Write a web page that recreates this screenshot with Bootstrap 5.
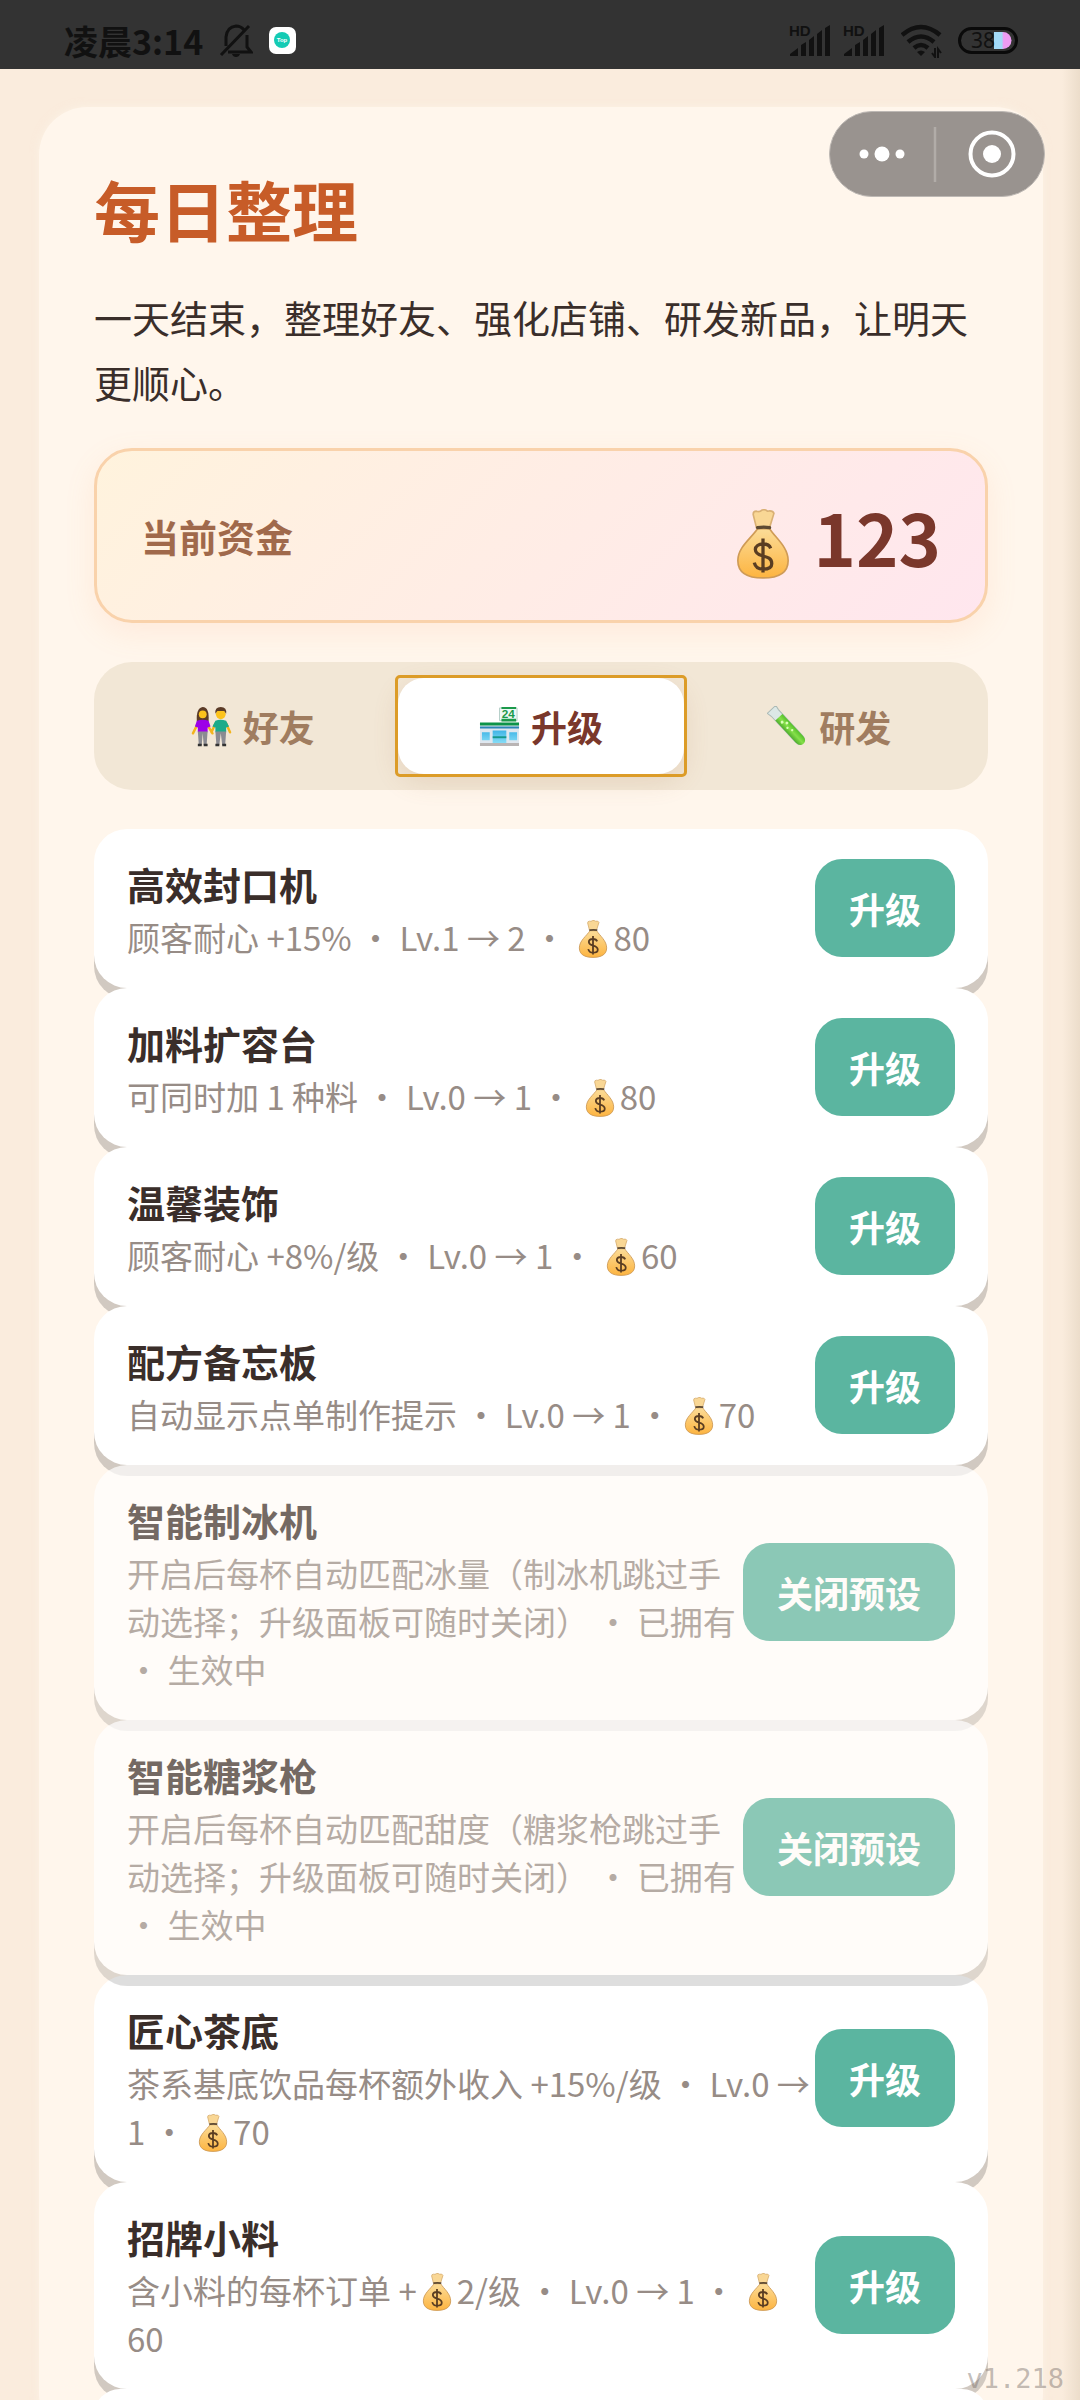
<!DOCTYPE html>
<html lang="zh-CN">
<head>
<meta charset="utf-8">
<meta name="viewport" content="width=device-width, initial-scale=1">
<title>每日整理</title>
<link rel="stylesheet" href="https://cdn.jsdelivr.net/npm/bootstrap@5.3.0/dist/css/bootstrap.min.css">
<style>
  body{font-family:"Noto Sans CJK SC",sans-serif;background:#faecdd;color:#3a2e2a;overflow:hidden}
  .screen{height:100vh;overflow:hidden;position:relative}
  .statusbar{height:69px;background:#333;color:#111;padding:12px 62px 0 64px;line-height:30px;position:relative;z-index:2}
  .clock{font-size:34px;font-weight:700}
  .appmark{width:27px;height:27px}
  .page-wrap{padding:38px 37px 0 39px;background:linear-gradient(90deg,transparent calc(100% - 18px),rgba(150,130,90,.14))}
  .panel{background:#fff6ec;border-radius:48px;padding:66px 55px 0;box-shadow:0 0 8px rgba(255,250,240,.5)}
  .page-title{color:#c75c28;font-size:66px;font-weight:700;line-height:70px;margin-bottom:41px}
  .intro{font-size:38px;line-height:65px;margin-bottom:34px}
  .funds{height:175px;border:3px solid #f9d2ab;border-radius:38px;padding:0 44px;background:linear-gradient(135deg,#fff3dd,#ffe6ee);box-shadow:0 10px 30px rgba(255,160,110,.13)}
  .funds-label{color:#a0694b;font-size:38px;font-weight:700}
  .funds-value{color:#7a372b;font-size:72px;font-weight:700;line-height:80px}
  .tabbar{margin-top:39px;background:#f2e7d6;border-radius:38px;padding:16px;gap:3px}
  .tabbar button{border:0;background:none;padding:0;height:96px;flex:1 1 0;border-radius:2px;font-size:36px;font-weight:600;color:#a07d60}
  .tabbar button > span{height:100%;border-radius:26px;gap:11px}
  .tabbar button.on{color:#7a372b;outline:3px solid #dc9c28}
  .tabbar button.on > span{background:#fff;box-shadow:0 8px 26px rgba(170,110,70,.16)}
  .items{margin-top:39px}
  .upgrade{background:#fff;border-radius:33px;padding:25px 33px 27px;box-shadow:0 11px 0 rgba(0,0,0,.18)}
  .upgrade.owned{opacity:.7}
  .upgrade h2{font-size:38px;line-height:59px;font-weight:700;margin:0;color:#3a2e2a}
  .upgrade p{font-size:33px;line-height:48px;margin:0;color:#978c86}
  .act{border:0;background:#5bb5a0;color:#fff;font-size:36px;font-weight:700;height:98px;padding:0 34px;border-radius:27px;white-space:nowrap}
  .capsule{position:absolute;right:35px;top:111px;width:216px;height:86px;z-index:3}
  .capsule button{position:absolute;top:0;width:50%;height:100%;opacity:0;border:0}
  .version{position:absolute;right:16px;bottom:3px;font:27px/36px "DejaVu Sans Mono",monospace;color:rgba(120,110,105,.45);z-index:3}
  .e-sm{width:38px;height:38px;vertical-align:-7px;margin:0 1px}
  .e-tab{width:41px;height:41px}
  .e-lg{width:70px;height:70px}
</style>
</head>
<body>
<svg width="0" height="0" class="position-absolute" aria-hidden="true">
  <defs>
    <linearGradient id="gold" x1="0" y1="0" x2="0" y2="1"><stop offset="0" stop-color="#fbdc98"/><stop offset="1" stop-color="#fdb440"/></linearGradient>
    <linearGradient id="glass" x1="0" y1="0" x2="0" y2="1"><stop offset="0" stop-color="#3fb4e6"/><stop offset="1" stop-color="#8ce0f8"/></linearGradient>
    <linearGradient id="lime" x1="0" y1="0" x2="1" y2="0"><stop offset="0" stop-color="#4fae2c"/><stop offset=".5" stop-color="#86e04a"/><stop offset="1" stop-color="#55c02a"/></linearGradient>
    <linearGradient id="charge" x1="0" y1="0" x2="1" y2="0"><stop offset=".45" stop-color="#a3daf7"/><stop offset=".55" stop-color="#ee9cf3"/></linearGradient>
    <symbol id="bag" viewBox="0 0 64 64">
      <path d="M26 17 23 5q0-3 3-3 3 1 5-1 3-1 5 1 5-1 6 2l-4 13z" fill="#f9d795" stroke="#d9b074" stroke-width="1.5"/>
      <path d="M27 18C21 27 9 35 9 47c0 11 9 16 23 16s23-5 23-16c0-12-11-20-17-29z" fill="url(#gold)" stroke="#cf9b56" stroke-width="1.5"/>
      <path d="M27 17q6-1 11 0" fill="none" stroke="#5d4a33" stroke-width="3" stroke-linecap="round"/>
      <path d="M39 36c-1-3-4-4-7-4-4 0-7 2-7 5 0 4 4 5 7 6 4 1 8 2 8 7 0 4-4 5-8 5s-7-2-8-6M32 27v31" fill="none" stroke="#5a3d22" stroke-width="3"/>
    </symbol>
    <symbol id="couple" viewBox="0 0 42 42">
      <path d="M6 16Q5 2 12 1q7 0 6 15z" fill="#5b3b27"/>
      <circle cx="12" cy="8.500" r="4" fill="#fcc21b"/>
      <path d="m7 18-5 10M16 18l6 10M25 18l-4 9M36 18l4 9" stroke="#f3b41c" stroke-width="2.500" stroke-linecap="round"/>
      <path d="M6 15q6-2 12 0l2 6-3 1v5H7v-5l-3-1z" fill="#9c00e8"/>
      <path d="M7 26h10l-1 14h-3l-1-12-1 12H8z" fill="#8b8b92"/>
      <circle cx="30.500" cy="8.500" r="5" fill="#fcc21b"/>
      <path d="M25 8q-1-7 5.500-7T36 8l-2-3h-7z" fill="#5b3b27"/>
      <path d="M25 15q5-2 11 0l3 6-3 1v5H25v-5l-3-1z" fill="#1aab8a"/>
      <path d="M25 26h11l-1 14h-3l-1.500-12L29 40h-3z" fill="#8b8b92"/>
      <path d="M7 40h4m2 0h4m8 0h4m3 0h4" stroke="#333" stroke-width="2.500"/>
    </symbol>
    <symbol id="store" viewBox="0 0 42 42">
      <path d="M21 2h18v13H21z" fill="#eef8f6" stroke="#b5cfc8"/><path d="M23 1h15v2H23zM23 13h15v3H23z" fill="#1c9a4b"/>
      <path d="M1 19h40v21H1z" fill="#dfe7ef"/>
      <path d="M1 17h40v3H1z" fill="#0d9349"/><path d="M1 21h40v2H1z" fill="#2b86b5"/>
      <path d="M3 27h8v8H3zM31 27h8v8h-8zM14 25h14v14H14z" fill="url(#glass)"/>
      <path d="M14 31h14v2H14z" fill="#16988c"/><path d="M1 38h40v3H1z" fill="#b9b4b4"/>
      <text x="30" y="12.500" font-size="12" font-weight="700" text-anchor="middle" fill="#1c9a4b" font-family="Liberation Sans,sans-serif">24</text>
    </symbol>
    <symbol id="tube" viewBox="0 0 42 42">
      <g transform="rotate(-43 21 21)">
        <path d="M15 -3h12l-1 5v36q0 6-5 6t-5-6V2z" fill="#dce8e6" stroke="#aab9b5"/>
        <path d="M16 8h10v31q0 6-5 6t-5-6z" fill="url(#lime)"/>
        <circle cx="20" cy="14" r="1.500" fill="#d8ffb5"/><circle cx="23" cy="18" r="1.500" fill="#d8ffb5"/><circle cx="20" cy="22" r="1.200" fill="#d8ffb5"/><circle cx="22" cy="27" r="1.200" fill="#d8ffb5"/>
      </g>
    </symbol>
    <symbol id="signal" viewBox="0 0 42 32">
      <text x="0" y="11" font-size="15" font-weight="700" fill="#111" font-family="Liberation Sans,sans-serif">HD</text>
      <path d="M1 31v-2l8-6v8zM12 31V20l5-3v14zM20 31V15l5-4v20zM28 31V9l5-4v26zM36 31V3l5-3v31z" fill="#111"/>
    </symbol>
  </defs>
</svg>
<div class="screen">
  <header class="statusbar d-flex justify-content-between">
    <div class="d-flex align-items-center gap-3">
      <span class="clock">凌晨3:14</span>
      <svg width="34" height="34" viewBox="0 0 34 34" fill="none" stroke="#111" stroke-width="3" aria-hidden="true"><path d="M7 22V13Q8 3 17 2q5 0 8 4M28 11v12l4 5H9M2 31 30 2"/><path d="M13 30h8q-1 3-4 3t-4-3z" fill="#111" stroke="none"/></svg>
      <svg class="appmark" viewBox="0 0 27 27" aria-hidden="true"><rect width="27" height="27" rx="7" fill="#fff"/><circle cx="13" cy="13" r="8" fill="#14cbb4"/><text x="13" y="15" font-size="6" font-weight="700" fill="#fff" text-anchor="middle" font-family="Liberation Sans,sans-serif">Top</text></svg>
    </div>
    <div class="d-flex align-items-center">
      <svg width="42" height="32" class="me-2"><use href="#signal"/></svg>
      <svg width="42" height="32" class="ms-1 me-3"><use href="#signal"/></svg>
      <svg width="41" height="34" viewBox="1 0 41 34" class="me-3" fill="none" stroke="#111" stroke-width="4.500" aria-hidden="true"><path d="M2 11Q21-5 40 11M8 18q13-11 26 0M14 24q7-6 14 0"/><path d="m17 28 4 4 4-4q-4-3-8 0z" fill="#111" stroke="none"/><path d="M35 24v9l-3-4M38 34v-9l3 4" stroke-width="2"/></svg>
      <svg width="60" height="27" viewBox="0 0 60 27" aria-hidden="true"><rect x="1.500" y="1.500" width="57" height="24" rx="12" fill="none" stroke="#0a0a0a" stroke-width="3"/><path d="M36 5h9a8.500 8.500 0 0 1 0 17h-9z" fill="url(#charge)"/><text x="25" y="21" font-size="21" text-anchor="middle" fill="#111" font-family="Noto Sans,sans-serif">38</text></svg>
    </div>
  </header>

  <main class="page-wrap">
    <div class="panel">
      <h1 class="page-title">每日整理</h1>
      <p class="intro">一天结束，整理好友、强化店铺、研发新品，让明天更顺心。</p>

      <section class="funds d-flex align-items-center justify-content-between">
        <span class="funds-label">当前资金</span>
        <span class="funds-value d-flex align-items-center gap-3"><svg class="e-lg mt-3"><use href="#bag"/></svg>123</span>
      </section>

      <nav class="tabbar d-flex" role="tablist">
        <button type="button" role="tab"><span class="d-flex align-items-center justify-content-center"><svg class="e-tab"><use href="#couple"/></svg>好友</span></button>
        <button type="button" role="tab" class="on" aria-selected="true"><span class="d-flex align-items-center justify-content-center"><svg class="e-tab"><use href="#store"/></svg>升级</span></button>
        <button type="button" role="tab"><span class="d-flex align-items-center justify-content-center"><svg class="e-tab"><use href="#tube"/></svg>研发</span></button>
      </nav>

      <div class="items">
        <article class="upgrade d-flex align-items-center justify-content-between"><div><h2>高效封口机</h2><p>顾客耐心 +15% ・ Lv.1 → 2 ・ <svg class="e-sm"><use href="#bag"/></svg>80</p></div><button type="button" class="act">升级</button></article>
        <article class="upgrade d-flex align-items-center justify-content-between"><div><h2>加料扩容台</h2><p>可同时加 1 种料 ・ Lv.0 → 1 ・ <svg class="e-sm"><use href="#bag"/></svg>80</p></div><button type="button" class="act">升级</button></article>
        <article class="upgrade d-flex align-items-center justify-content-between"><div><h2>温馨装饰</h2><p>顾客耐心 +8%/级 ・ Lv.0 → 1 ・ <svg class="e-sm"><use href="#bag"/></svg>60</p></div><button type="button" class="act">升级</button></article>
        <article class="upgrade d-flex align-items-center justify-content-between"><div><h2>配方备忘板</h2><p>自动显示点单制作提示 ・ Lv.0 → 1 ・ <svg class="e-sm"><use href="#bag"/></svg>70</p></div><button type="button" class="act">升级</button></article>
        <article class="upgrade owned d-flex align-items-center justify-content-between"><div><h2>智能制冰机</h2><p>开启后每杯自动匹配冰量（制冰机跳过手动选择；升级面板可随时关闭） ・ 已拥有 ・ 生效中</p></div><button type="button" class="act">关闭预设</button></article>
        <article class="upgrade owned d-flex align-items-center justify-content-between"><div><h2>智能糖浆枪</h2><p>开启后每杯自动匹配甜度（糖浆枪跳过手动选择；升级面板可随时关闭） ・ 已拥有 ・ 生效中</p></div><button type="button" class="act">关闭预设</button></article>
        <article class="upgrade d-flex align-items-center justify-content-between"><div><h2>匠心茶底</h2><p>茶系基底饮品每杯额外收入 +15%/级 ・ Lv.0 → 1 ・ <svg class="e-sm"><use href="#bag"/></svg>70</p></div><button type="button" class="act">升级</button></article>
        <article class="upgrade d-flex align-items-center justify-content-between"><div><h2>招牌小料</h2><p>含小料的每杯订单 +<svg class="e-sm"><use href="#bag"/></svg>2/级 ・ Lv.0 → 1 ・ <svg class="e-sm"><use href="#bag"/></svg>60</p></div><button type="button" class="act">升级</button></article>
        <article class="upgrade" aria-hidden="true"></article>
      </div>
    </div>
  </main>

  <div class="capsule">
    <svg width="216" height="86" viewBox="0 0 216 86" aria-hidden="true"><rect x=".5" y=".5" width="215" height="85" rx="42.500" fill="#99938f" stroke="#bdb8b4"/><g fill="#fff"><circle cx="35" cy="43" r="4.500"/><circle cx="53" cy="43" r="7.500"/><circle cx="71" cy="43" r="4.500"/><circle cx="163" cy="43" r="9"/></g><path d="M106 16v55" stroke="#b1aca8" stroke-width="2.500"/><circle cx="163" cy="43" r="21.500" fill="none" stroke="#fff" stroke-width="4"/></svg>
    <button type="button" class="start-0" aria-label="更多"></button><button type="button" class="end-0" aria-label="关闭"></button>
  </div>
  <div class="version">v1.218</div>
</div>
<script src="https://cdn.jsdelivr.net/npm/bootstrap@5.3.0/dist/js/bootstrap.bundle.min.js"></script>
</body>
</html>
